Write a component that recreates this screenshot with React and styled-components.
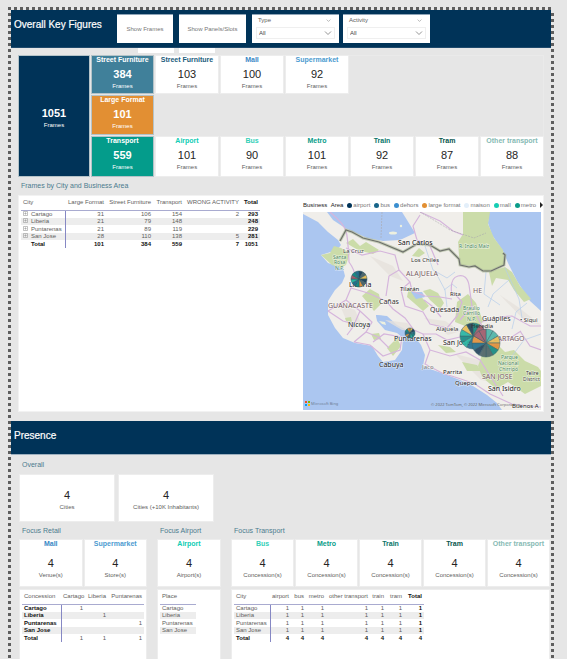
import React from "react";
import styled, { createGlobalStyle } from "styled-components";

const GlobalStyle = createGlobalStyle`
  * { box-sizing: border-box; }
  body {
    margin: 0;
    background: #e6e6e6;
    font-family: "Liberation Sans", Arial, sans-serif;
    font-size: 6px;
    color: #605e5c;
  }
`;

const Page = styled.div`
  min-height: 100vh;
  padding: 7px 13px 0 8px;
  display: flex;
`;

const dots = (angle) =>
  `repeating-linear-gradient(${angle}, #5e5e5e 0 3px, #e6e6e6 3px 6px)`;

const Report = styled.main`
  flex: 1;
  min-width: 0;
  display: flex;
  flex-direction: column;
  padding: 3px 3px 0;
  background:
    ${dots("90deg")} top / 100% 3px no-repeat,
    ${dots("180deg")} left / 3px 100% no-repeat,
    ${dots("180deg")} right / 3px 100% no-repeat;
`;

const Banner = styled.header`
  display: flex;
  align-items: flex-start;
  height: ${(p) => p.$height}px;
  padding: 4px 3px;
  background: #003358;
  border-bottom: 1px solid ${(p) => p.$edge};
`;

const BannerTitle = styled.h2`
  margin: 0;
  width: 103px;
  font-size: 10px;
  font-weight: 400;
  line-height: 21px;
  color: #fff;
  white-space: nowrap;
  -webkit-text-stroke: 0.2px #fff;
`;

const ToggleButton = styled.button`
  width: ${(p) => p.$width}px;
  height: 29px;
  margin-right: 6px;
  padding: 0;
  border: 0;
  border-top: 1px solid #8fa5b8;
  background: #fff;
  color: #777;
  font: 6px "Liberation Sans", Arial, sans-serif;
  white-space: nowrap;
`;

const Slicer = styled.div`
  width: 87px;
  height: 29px;
  margin-right: 4px;
  padding: 2px 4px;
  background: #fff;
  border-top: 1px solid #8fa5b8;
`;

const SlicerHead = styled.div`
  display: flex;
  justify-content: space-between;
  align-items: center;
  height: 7px;
  padding: 0 4px 0 2px;
  line-height: 7px;
`;

const SlicerBox = styled.div`
  display: grid;
  align-items: center;
  margin-top: 3px;
  border: 1px solid #efefef;

  > * { grid-area: 1 / 1; }
  > svg { justify-self: end; margin-right: 2px; pointer-events: none; }
`;

const SlicerSelect = styled.select`
  appearance: none;
  width: 100%;
  height: 10px;
  padding: 0 2px;
  border: 0;
  background: #fff;
  color: #444;
  font: 6px "Liberation Sans", Arial, sans-serif;
`;

const TabStubs = styled.div`
  display: flex;
  gap: 5px;
  height: 8px;
  padding-left: 127px;
`;

const TabStub = styled.div`
  width: 36px;
  height: 5px;
  background: #fff;
`;

const Summary = styled.section`
  display: grid;
  grid-template-columns: 70fr 61fr repeat(6, 62fr);
  grid-template-rows: 37px 38px 39px;
  gap: 3px;
  margin: 0 8px;
  box-shadow: 0 0 0 1px #eaeaea;
`;

const Tile = styled.article`
  display: flex;
  flex-direction: column;
  align-items: center;
  min-width: 0;
  min-height: ${(p) => (p.$tall ? 46 : 37)}px;
  justify-content: ${(p) => (p.$centered ? "center" : "flex-start")};
  ${(p) => p.$row && `grid-row: ${p.$row};`}
  ${(p) => p.$col && `grid-column: ${p.$col};`}
  background: ${(p) => p.$fill || "#fff"};
  color: ${(p) => (p.$fill ? "#fff" : "#605e5c")};
  box-shadow: 0 0 0 1px ${(p) => (p.$fill ? "#b4c3c8" : "#ededed")};
  white-space: nowrap;
`;

const TileTitle = styled.h3`
  margin: 0;
  font-size: 7px;
  line-height: 8px;
  color: ${(p) => p.$color};
`;

const TileValue = styled.strong`
  margin-top: ${(p) => (p.$tall ? 9 : 4)}px;
  font-size: 11px;
  line-height: 13px;
  font-weight: ${(p) => (p.$bold ? 700 : 400)};
  color: ${(p) => (p.$light ? "#fff" : "#252423")};
`;

const TileLabel = styled.span`
  margin-top: 2px;
  line-height: 7px;
`;

const SectionLabel = styled.h3`
  margin: 0;
  padding-left: 2px;
  font-size: 7px;
  font-weight: 400;
  line-height: ${(p) => p.$height}px;
  color: #4b7b8e;
  white-space: nowrap;
`;

const CitySection = styled.section`
  margin: 0 8px 10px;
`;

const CityPanel = styled.div`
  display: grid;
  grid-template-columns: 284fr 240fr;
  min-height: 215px;
  background: #fff;
  box-shadow: 0 0 0 1px #f2f2f2;
`;

const Matrix = styled.table`
  align-self: start;
  width: ${(p) => p.$width}px;
  margin: 0 2px;
  border-collapse: collapse;
  table-layout: fixed;
  line-height: 7px;
  white-space: nowrap;

  th, td { padding: 0 2px; text-align: right; font-weight: 400; }
  th:first-child { text-align: left; }
  thead th { height: 14px; padding-bottom: 1px; border-bottom: 1px solid #a9abd0; }
  tbody tr { height: 8px; }
  tbody tr:nth-child(even) { height: 7px; background: #ededed; }
  tbody th { ${(p) => !p.$plain && "border-right: 1px solid #8688c4;"} }
  ${(p) => p.$boldRows && "tbody th { font-weight: 700; color: #111; }"}
  ${(p) => p.$total && `
    thead th:last-child, tbody td:last-child, tbody tr:last-child > * {
      font-weight: 700;
      color: #111;
    }
  `}
`;

const ExpandButton = styled.button`
  width: 5px;
  height: 5px;
  margin: 0 3px 0 0;
  padding: 0;
  border: 0;
  background: none;
  vertical-align: top;
  svg { display: block; }
`;

const RowName = styled.span`
  padding-left: ${(p) => (p.$indent ? 8 : 0)}px;
`;

const MapPane = styled.div`
  display: flex;
  flex-direction: column;
  min-width: 0;
  padding: 5px 2px 1px 0;
`;

const Legend = styled.div`
  display: flex;
  align-items: center;
  gap: 4px;
  height: 8px;
  margin-bottom: 3px;
  color: #777;
  white-space: nowrap;
`;

const LegendTitle = styled.strong`
  font-weight: 400;
  color: #222;
`;

const LegendItem = styled.span`
  display: flex;
  align-items: center;
  &::before {
    content: "";
    width: 5px;
    height: 5px;
    margin-right: 1px;
    border-radius: 50%;
    background: ${(p) => p.$color};
  }
`;

const LegendNext = styled.button`
  margin-left: auto;
  width: 4px;
  height: 6px;
  padding: 0;
  border: 0;
  background: none;
  svg { display: block; }
`;

const MapSvg = styled.svg`
  display: block;
  flex: 1;
  width: 100%;
  min-height: 0;
  font-family: "Noto Sans", sans-serif;
`;

const Presence = styled.section`
  flex: 1;
  display: flex;
  flex-direction: column;
  padding: 0 2px 0 9px;
`;

const OverallRow = styled.div`
  display: flex;
  gap: 5px;
  > * { width: 94px; }
`;

const FocusGrid = styled.div`
  flex: 1;
  display: grid;
  grid-template-columns: 126fr 62fr 317fr;
  gap: 12px;
`;

const FocusGroup = styled.div`
  display: flex;
  flex-direction: column;
  min-width: 0;
`;

const TileRow = styled.div`
  display: grid;
  grid-auto-flow: column;
  grid-auto-columns: 1fr;
  gap: 3px;
  margin-bottom: 4px;
`;

const TablePanel = styled.div`
  flex: 1;
  background: #fff;
  box-shadow: 0 0 0 1px #ededed;
`;

function Chevron({ size }) {
  return (
    <svg width={size} height={size} viewBox="0 0 8 8" fill="none" stroke="#888" strokeWidth="0.9">
      <path d="M1 2.5 4 5.5 7 2.5" />
    </svg>
  );
}

function Filter({ name }) {
  const id = `filter-${name}`;
  return (
    <Slicer>
      <SlicerHead>
        <label htmlFor={id}>{name}</label>
        <Chevron size={5} />
      </SlicerHead>
      <SlicerBox>
        <SlicerSelect id={id} defaultValue="All">
          <option>All</option>
        </SlicerSelect>
        <Chevron size={8} />
      </SlicerBox>
    </Slicer>
  );
}

function Metric({ title, color, value, label, fill, row, col, tall, centered, bold }) {
  return (
    <Tile $fill={fill} $row={row} $col={col} $tall={tall} $centered={centered}>
      {title && <TileTitle $color={color}>{title}</TileTitle>}
      <TileValue $tall={tall && !centered} $bold={bold} $light={Boolean(fill)}>{value}</TileValue>
      <TileLabel>{label}</TileLabel>
    </Tile>
  );
}

function DataTable({ head, rows, cols, expandable, ...style }) {
  return (
    <Matrix $width={cols.reduce((a, b) => a + b, 0)} {...style}>
      <colgroup>
        {cols.map((w, i) => <col key={i} width={w} />)}
      </colgroup>
      <thead>
        <tr>{head.map((h) => <th key={h} scope="col">{h}</th>)}</tr>
      </thead>
      <tbody>
        {rows.map(([name, ...cells]) => (
          <tr key={name}>
            <th scope="row">
              {expandable && name !== "Total" && (
                <ExpandButton aria-label={`Expand ${name}`}>
                  <svg width="5" height="5" viewBox="0 0 5 5" fill="none" stroke="#999" strokeWidth="0.6">
                    <path d="M.5.5h4v4h-4zM1.3 2.5h2.4M2.5 1.3v2.4" />
                  </svg>
                </ExpandButton>
              )}
              <RowName $indent={expandable && name === "Total"}>{name}</RowName>
            </th>
            {cells.map((c, i) => <td key={i}>{c}</td>)}
          </tr>
        ))}
      </tbody>
    </Matrix>
  );
}

const PIE = {
  navy: "#24445f", blue: "#236f8d", teal: "#168b86", mint: "#28b5a3",
  orange: "#e0903d", yellow: "#e8bd58", rose: "#a05b6a", slate: "#50666c", sea: "#4fb5a8",
};

function Pie({ x, y, r, slices }) {
  const step = (Math.PI * 2) / slices.length;
  return (
    <g stroke="#2f5960" strokeWidth="0.5">
      {slices.map((c, i) => {
        const a = i * step - Math.PI / 2;
        const b = a + step;
        return (
          <path
            key={i}
            fill={PIE[c]}
            d={`M${x} ${y}L${x + r * Math.cos(a)} ${y + r * Math.sin(a)}A${r} ${r} 0 0 1 ${x + r * Math.cos(b)} ${y + r * Math.sin(b)}Z`}
          />
        );
      })}
    </g>
  );
}

const PLACES = [
  [398, 245, "San Carlos", 7, "#111"], [343, 253, "La Cruz", 6, "#444"],
  [411, 262, "Los Chiles", 6, "#333"], [349, 287, "Liberia", 7, "#111"],
  [400, 291, "Tilarán", 6, "#222"], [379, 304, "Cañas", 7, "#333"],
  [348, 327, "Nicoya", 7, "#222"], [394, 341, "Puntarenas", 7, "#222"],
  [379, 367, "Cabuya", 7, "#222"], [450, 296, "Rita", 6, "#333"],
  [430, 312, "Quesada", 7, "#333"], [436, 331, "Alajuela", 6, "#333"],
  [482, 321, "Guápiles", 7, "#333"], [520, 322, "• Siqui", 6, "#333"],
  [443, 345, "San José", 7, "#222"],
  [422, 369, "Jaco", 6, "#777"], [443, 374, "Parrita", 6, "#222"],
  [455, 385, "Quepos", 6, "#222"], [488, 391, "San Isidro", 7, "#222"],
  [512, 408, "Buenos A", 6, "#222"], [526, 375, "Telire", 5, "#333"],
  [523, 381, "District", 5, "#444"],
];

const REGIONS = [
  [406, 276, "ALAJUELA"], [328, 308, "GUANACASTE"], [473, 293, "HE"],
  [493, 341, "CARTAGO"], [482, 379, "SAN JOSE"],
];

const PARKS = [
  [459, 248, "R. Indio Maíz"], [333, 259, "Santa"], [334, 264, "Rosa"], [335, 270, "N.P."],
  [463, 310, "Braulio"], [463, 315, "Carrillo"], [467, 321, "N.P."],
  [501, 359, "Parque"], [498, 365, "Nacional"], [499, 371, "Chirripó"],
];

const ROADS = [
  "M330 212Q344 224 346 231T349 262Q360 277 351 288L368 293 386 301 393 309 405 318 414 330 423 334 436 334 447 340 460 337",
  "M351 288L346 300 328 311 M346 300L360 311 372 322 366 332 354 342 M360 311L353 327 347 335 M354 342L370 345 383 356 400 350 402 337 384 334 373 342",
  "M346 248L362 255 380 251 395 255 399 270 389 276 386 296 M399 270L410 282 412 291 425 296 440 297 452 299 M410 282L401 290 405 306 423 312 430 324 447 328",
  "M452 296Q449 278 458 276T469 285L472 306 480 322 484 330 M455 294L462 302 457 316 447 328 M472 306L460 320 M482 322L500 317 512 316 530 326 541 326",
  "M423 334L430 350 425 364 442 373 461 379 475 384 490 394 512 404 541 407 M430 350L450 356 466 352 480 360 492 379 503 396",
  "M420 215L413 226 417 240 430 246 438 265 M420 212L440 221 453 231 463 235",
  "M441 317L432 306 424 300 M490 342L507 340 521 331 M520 331L530 346 541 350 M366 332L378 337 389 348 M328 311L343 321 354 324",
];

const GREENS = [
  "M463 212H490L488 224 494 238 503 250 505 264 487 272 475 266 461 265 459 256 458 242 463 234Z",
  "M321 255L330 253 334 246 341 248 350 253 346 265 340 268 332 265Z",
  "M489 272L505 267 512 272 520 286 531 299 524 302 514 290 508 280 496 278 492 286Z",
  "M457 302L468 294 476 303 483 321 474 334 465 326 455 322Z",
  "M483 352L497 344 505 352 514 350 525 361 538 367 541 371V386L525 394 508 382 496 389 482 377 478 366Z",
  "M362 296L370 289 379 294 381 304 374 311 367 302Z",
  "M409 287L419 294 429 306 423 311 414 303 407 297Z",
  "M444 303L438 293 430 289 423 291 430 300 440 309Z",
  "M346 243L353 239 360 246 366 242 379 250 373 254 358 250Z",
  "M387 348L397 338 401 346 393 356Z M345 318L351 317 352 322 346 321Z M371 334L379 333 381 339 374 340Z",
  "M438 345L450 347 456 352 446 353Z M412 256L419 248 425 253 419 257Z M462 362L477 365 481 371 467 371Z M480 345L499 347 499 359 487 362Z",
];

const BORDER =
  "M340 241L346 230 352 232 363 238 379 242 403 252 417 244 430 245 440 251 449 249 459 259 460 265 469 267 475 266 483 271 491 271 504 265 505 255 503 253";

function CityMap() {
  return (
    <MapSvg viewBox="303 212 238 198" preserveAspectRatio="xMidYMid slice" role="img" aria-label="Map of frames by city">
      <rect x="303" y="212" width="238" height="198" fill="#abc6f0" />
      <path
        fill="#f0eeea"
        d="M303 212H327L333 220 345 228 367 238 383 241 400 240 415 233 407 220 402 212H489L488 223 492 235 503 251 508 263 517 281 530 301 541 311V410H502L497 403 487 395 473 386 460 380 447 375 433 370 423 366 425 355 421 345 415 337 407 330 397 325 387 316 376 315 377 321 385 330 397 333 403 338 402 350 395 360 383 362 378 356 372 346 355 343 343 338 335 328 328 315 328 301 335 290 342 283 345 276 343 268 328 263 321 255 337 250 341 245 338 240 328 232 318 222 303 214Z"
      />
      <path
        fill="#e6e1dc"
        opacity="0.8"
        d="M370 256L393 266 403 281 390 276 378 264ZM424 318L445 321 461 331 448 335ZM455 354L479 360 502 384 481 380ZM385 320L407 323 417 331 402 330ZM339 303L355 310 362 325 350 329ZM500 295L518 307 541 325 525 321Z"
      />
      <g fill="#cbdca9">{GREENS.map((d) => <path key={d} d={d} />)}</g>
      <path fill="#abc6f0" d="M376 315L384 316 382 320 377 319ZM411 292L422 292 425 297 416 299ZM381 320L390 324 386 327Z" />
      <g fill="#edf0df">
        <ellipse cx="393" cy="233" rx="4" ry="1.5" />
        <circle cx="401" cy="226" r="1.2" />
        <path d="M379 321L385 322 386 325 382 324Z" />
      </g>
      <path
        fill="none"
        stroke="#b5cdeb"
        strokeWidth="0.7"
        d="M425 246L433 270 447 278 455 272M486 272L484 294 500 305M505 268L519 299 522 318M509 280L493 294 488 307M444 290L452 284 457 288M527 303L516 312 512 329M437 275L445 290 447 307M541 334L524 340 512 356"
      />
      <g fill="none" stroke="#d5b5dc" strokeWidth="1.2">{ROADS.map((d) => <path key={d} d={d} />)}</g>
      <path d="M382 212L381 238M420 212Q434 220 450 230L474 238 486 233" fill="none" stroke="#aaa7ad" strokeWidth="0.6" strokeDasharray="2 1" />
      <path d={BORDER} fill="none" stroke="#a9b595" strokeWidth="3" opacity="0.6" />
      <path d={BORDER} fill="none" stroke="#6d706b" strokeWidth="1.2" />
      <g stroke="#fff" strokeWidth="1.2" strokeOpacity="0.6" paintOrder="stroke">
        {REGIONS.map(([x, y, t]) => <text key={t} x={x} y={y} fontSize="7" fill="#765b63">{t}</text>)}
        {PARKS.map(([x, y, t]) => <text key={t + y} x={x} y={y} fontSize="5" fill="#45845a">{t}</text>)}
        {PLACES.map(([x, y, t, s, c]) => <text key={t} x={x} y={y} fontSize={s} fill={c}>{t}</text>)}
      </g>
      <Pie x={359} y={279} r={8} slices={["navy", "slate", "yellow", "navy", "slate", "orange", "teal", "blue", "mint", "rose", "teal", "blue"]} />
      <Pie x={410} y={333} r={5} slices={["yellow", "navy", "blue", "teal", "mint", "slate", "orange", "blue", "teal", "orange"]} />
      <g opacity="0.92">
        <Pie x={473} y={336} r={13} slices={["teal", "rose", "rose", "navy", "orange", "blue", "blue", "mint", "teal", "mint", "yellow", "navy"]} />
        <Pie x={486} y={343} r={14} slices={["sea", "sea", "yellow", "orange", "teal", "slate", "slate", "navy", "blue", "orange", "rose", "rose"]} />
      </g>
      <text x="471" y="328" fontSize="6" fill="#333">Heredia</text>
      <path d="M305 401h2v2h-2z" fill="#f25022" />
      <path d="M308 401h2v2h-2z" fill="#7fba00" />
      <path d="M305 404h2v2h-2z" fill="#00a4ef" />
      <path d="M308 404h2v2h-2z" fill="#ffb900" />
      <text x="311" y="405" fontSize="4" fill="#6f7f95">Microsoft Bing</text>
      <text x="431" y="406" fontSize="4" fill="#666">© 2022 TomTom, © 2022 Microsoft Corporation</text>
    </MapSvg>
  );
}

const LEGEND = [
  ["airport", "#003358"], ["bus", "#17658a"], ["dehors", "#3b8fd0"],
  ["large format", "#e28f33"], ["maison", "#e3effa"], ["mall", "#16cdb4"], ["metro", "#0a9c8a"],
];

const C = {
  street: "#1a5c7c", mall: "#3787c5", market: "#4c9bd0", airport: "#10cdb4",
  bus: "#35d0b8", metro: "#079c88", train: "#087568", tram: "#07564d", other: "#86bab4",
};

const TRANSPORT = [
  ["Airport", C.airport, 101], ["Bus", C.bus, 90], ["Metro", C.metro, 101],
  ["Train", C.train, 92], ["Tram", C.tram, 87], ["Other transport", C.other, 88],
];

export default function App() {
  return (
    <Page>
      <GlobalStyle />
      <Report>
        <Banner $height={38} $edge="#1f4a6c">
          <BannerTitle>Overall Key Figures</BannerTitle>
          <ToggleButton $width={56}>Show Frames</ToggleButton>
          <ToggleButton $width={67}>Show Panels/Slots</ToggleButton>
          <Filter name="Type" />
          <Filter name="Activity" />
        </Banner>
        <TabStubs>
          <TabStub />
          <TabStub />
        </TabStubs>

        <Summary>
          <Metric fill="#003358" row="1 / 4" col="1" centered bold value="1051" label="Frames" />
          <Metric fill="#40809a" row="1" col="2" bold title="Street Furniture" color="#fff" value="384" label="Frames" />
          <Metric row="1" col="3" title="Street Furniture" color={C.street} value="103" label="Frames" />
          <Metric row="1" col="4" title="Mall" color={C.mall} value="100" label="Frames" />
          <Metric row="1" col="5" title="Supermarket" color={C.market} value="92" label="Frames" />
          <Metric fill="#e28f33" row="2" col="2" bold title="Large Format" color="#fff" value="101" label="Frames" />
          <Metric fill="#049c8b" row="3" col="2" bold title="Transport" color="#fff" value="559" label="Frames" />
          {TRANSPORT.map(([title, color, value], i) => (
            <Metric key={title} row="3" col={i + 3} title={title} color={color} value={value} label="Frames" />
          ))}
        </Summary>

        <CitySection>
          <SectionLabel $height={20}>Frames by City and Business Area</SectionLabel>
          <CityPanel>
            <DataTable
              $total
              expandable
              cols={[44, 41, 47, 31, 57, 19]}
              head={["City", "Large Format", "Street Furniture", "Transport", "WRONG ACTIVITY", "Total"]}
              rows={[
                ["Cartago", 31, 106, 154, 2, 293],
                ["Liberia", 21, 79, 148, "", 248],
                ["Puntarenas", 21, 89, 119, "", 229],
                ["San Jose", 28, 110, 138, 5, 281],
                ["Total", 101, 384, 559, 7, 1051],
              ]}
            />
            <MapPane>
              <Legend>
                <LegendTitle>Business &nbsp;Area</LegendTitle>
                {LEGEND.map(([name, color]) => <LegendItem key={name} $color={color}>{name}</LegendItem>)}
                <LegendNext aria-label="More">
                  <svg width="4" height="6" viewBox="0 0 4 6"><path d="M0 0 3 3 0 6Z" fill="#222" /></svg>
                </LegendNext>
              </Legend>
              <CityMap />
            </MapPane>
          </CityPanel>
        </CitySection>

        <Banner $height={34} $edge="#9db0bf">
          <BannerTitle>Presence</BannerTitle>
        </Banner>
        <Presence>
          <SectionLabel $height={20}>Overall</SectionLabel>
          <OverallRow>
            <Metric tall centered value="4" label="Cities" />
            <Metric tall centered value="4" label="Cities (+10K Inhabitants)" />
          </OverallRow>
          <FocusGrid>
            <FocusGroup>
              <SectionLabel $height={19}>Focus Retail</SectionLabel>
              <TileRow>
                <Metric tall title="Mall" color={C.mall} value="4" label="Venue(s)" />
                <Metric tall title="Supermarket" color={C.market} value="4" label="Store(s)" />
              </TileRow>
              <TablePanel>
                <DataTable
                  $boldRows
                  cols={[39, 24, 23, 36]}
                  head={["Concession", "Cartago", "Liberia", "Puntarenas"]}
                  rows={[
                    ["Cartago", 1, "", ""], ["Liberia", "", 1, ""], ["Puntarenas", "", "", 1],
                    ["San Jose", "", "", ""], ["Total", 1, 1, 1],
                  ]}
                />
              </TablePanel>
            </FocusGroup>
            <FocusGroup>
              <SectionLabel $height={19}>Focus Airport</SectionLabel>
              <TileRow>
                <Metric tall title="Airport" color={C.airport} value="4" label="Airport(s)" />
              </TileRow>
              <TablePanel>
                <DataTable
                  $plain
                  cols={[36]}
                  head={["Place"]}
                  rows={[["Cartago"], ["Liberia"], ["Puntarenas"], ["San Jose"]]}
                />
              </TablePanel>
            </FocusGroup>
            <FocusGroup>
              <SectionLabel $height={19}>Focus Transport</SectionLabel>
              <TileRow>
                {TRANSPORT.slice(1).map(([title, color]) => (
                  <Metric key={title} tall title={title} color={color} value="4" label="Concession(s)" />
                ))}
              </TileRow>
              <TablePanel>
                <DataTable
                  $total
                  cols={[36, 21, 15, 20, 44, 16, 18, 20]}
                  head={["City", "airport", "bus", "metro", "other transport", "train", "tram", "Total"]}
                  rows={[
                    ...["Cartago", "Liberia", "Puntarenas", "San Jose"].map((n) => [n, 1, 1, 1, 1, 1, 1, 1]),
                    ["Total", 4, 4, 4, 4, 4, 4, 4],
                  ]}
                />
              </TablePanel>
            </FocusGroup>
          </FocusGrid>
        </Presence>
      </Report>
    </Page>
  );
}
